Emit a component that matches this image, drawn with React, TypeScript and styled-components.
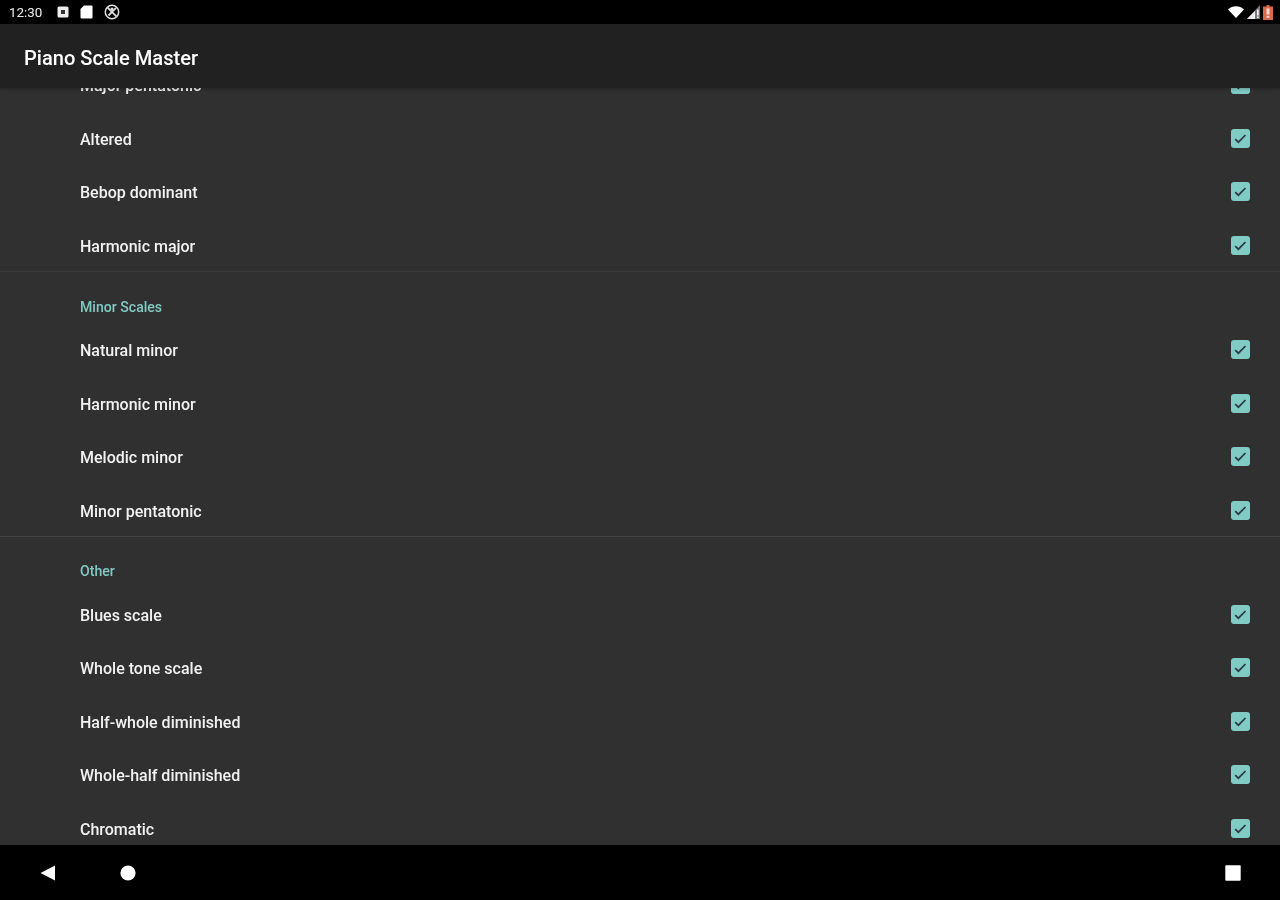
import React from 'react';
import styled, { createGlobalStyle } from 'styled-components';

const GlobalStyle = createGlobalStyle`
  html, body {
    margin: 0;
    padding: 0;
    background: #000;
  }
`;

const Screen = styled.div`
  width: 1280px;
  height: 900px;
  display: flex;
  flex-direction: column;
  overflow: hidden;
  background: #303030;
  font-family: Roboto, "Liberation Sans", sans-serif;
  filter: blur(0.6px);
`;

const StatusBar = styled.div`
  height: 24px;
  flex: none;
  background: #000;
  display: flex;
  align-items: center;
  justify-content: space-between;
  padding: 0 7px 0 9px;
  color: #fff;
`;

const StatusGroup = styled.div<{ $gap: number }>`
  display: flex;
  align-items: center;
  gap: ${({ $gap }) => $gap}px;
`;

const Clock = styled.span`
  font-size: 13.4px;
  width: 37px;
  color: #eee;
`;

const AppBar = styled.header`
  height: 64px;
  flex: none;
  background: #212121;
  display: flex;
  align-items: center;
  padding: 3px 0 0 24px;
  box-sizing: border-box;
  position: relative;
  z-index: 1;
  box-shadow: 0 1px 3px rgba(0, 0, 0, 0.25);
`;

const Title = styled.h1`
  margin: 0;
  font-size: 20.1px;
  font-weight: 500;
  color: #fff;
`;

const Viewport = styled.main`
  flex: 1;
  min-height: 0;
  overflow: hidden;
`;

const ScrollContent = styled.div`
  margin-top: -28.9px;
`;

const Row = styled.div`
  height: 53.5px;
  display: flex;
  align-items: center;
  justify-content: space-between;
  padding: 0 30px 0 80px;
`;

const RowLabel = styled.span`
  font-size: 16px;
  font-weight: 500;
  color: #f2f2f2;
`;

const CheckBox = styled.span`
  width: 19px;
  height: 19px;
  margin-bottom: 2px;
  border-radius: 3px;
  background: #80cbc4;
  display: flex;
  align-items: center;
  justify-content: center;
`;

const Divider = styled.hr<{ $bright?: boolean }>`
  margin: -1.9px 0 0;
  border: 0;
  height: 1px;
  background: ${({ $bright }) => ($bright ? '#454545' : '#3a3a3a')};
`;

const SectionHeader = styled.h2`
  margin: 0;
  height: 51.65px;
  box-sizing: border-box;
  padding: 25.4px 0 0 80px;
  font-size: 14.1px;
  line-height: 18px;
  font-weight: 500;
  color: #80cbc4;
`;

const NavBar = styled.nav`
  height: 55px;
  flex: none;
  background: #000;
  display: flex;
  align-items: center;
  padding: 0 39px 0 40px;
  position: relative;
  z-index: 1;
`;

const NavLeft = styled.div`
  display: flex;
  align-items: center;
  gap: 64px;
  flex: 1;
`;

const sections = [
  { rows: ['Major pentatonic', 'Altered', 'Bebop dominant', 'Harmonic major'] },
  { title: 'Minor Scales', rows: ['Natural minor', 'Harmonic minor', 'Melodic minor', 'Minor pentatonic'] },
  { title: 'Other', rows: ['Blues scale', 'Whole tone scale', 'Half-whole diminished', 'Whole-half diminished', 'Chromatic'] },
];

const Check = () => (
  <svg width="13" height="11" viewBox="0 0 13 11" aria-hidden="true">
    <path d="M1.2 6.2 L4.4 9.2 L11.5 2" fill="none" stroke="#2b3a44" strokeWidth="1.7" />
  </svg>
);

const NotificationIcon = () => (
  <svg width="12" height="12" viewBox="0 0 12 12" aria-hidden="true">
    <rect x="0.5" y="0.5" width="11" height="11" rx="1.5" fill="#eee" />
    <rect x="4" y="4" width="4" height="4" fill="#333" />
  </svg>
);

const SdCardIcon = () => (
  <svg width="13" height="14" viewBox="0 0 13 14" aria-hidden="true">
    <path d="M4 0.5 H11.5 A1 1 0 0 1 12.5 1.5 V12.5 A1 1 0 0 1 11.5 13.5 H1.5 A1 1 0 0 1 0.5 12.5 V4 Z" fill="#fff" />
  </svg>
);

const BlockedIcon = () => (
  <svg width="16" height="16" viewBox="0 0 16 16" aria-hidden="true">
    <circle cx="8" cy="8" r="6.7" fill="none" stroke="#ddd" strokeWidth="1.5" />
    <path d="M3.4 3.4 L12.6 12.6 M12 3.8 L4.5 11.5" stroke="#ddd" strokeWidth="1.8" />
    <circle cx="8" cy="5" r="1.6" fill="#ddd" />
  </svg>
);

const WifiIcon = () => (
  <svg width="16" height="12" viewBox="0 0 16 12" aria-hidden="true">
    <path d="M0 3.4 C4.4 -0.8 11.6 -0.8 16 3.4 L8 12 Z" fill="#fff" />
  </svg>
);

const SignalIcon = () => (
  <svg width="13" height="14" viewBox="0 0 13 14" aria-hidden="true">
    <path d="M13 0 V14 H0 Z" fill="#777" />
    <path d="M8 6 V14 H0 Z" fill="#eee" />
    <rect x="10" y="4.5" width="1.6" height="6" fill="#fff" />
    <rect x="10" y="11.5" width="1.6" height="1.6" fill="#fff" />
  </svg>
);

const BatteryIcon = () => (
  <svg width="10" height="15" viewBox="0 0 10 15" aria-hidden="true">
    <path d="M3.5 0 H6.5 V1.5 H10 V15 H0 V1.5 H3.5 Z" fill="#d9694a" />
    <rect x="3.5" y="3.5" width="3" height="6" fill="#f6d8cd" />
    <rect x="3.5" y="10.8" width="3" height="2" fill="#f6d8cd" />
  </svg>
);

const BackIcon = () => (
  <svg width="16" height="16" viewBox="0 0 16 16" aria-hidden="true">
    <path d="M15 0.5 V15.5 L0.5 8 Z" fill="#fff" />
  </svg>
);

const HomeIcon = () => (
  <svg width="16" height="16" viewBox="0 0 16 16" aria-hidden="true">
    <circle cx="8" cy="8" r="7.6" fill="#fff" />
  </svg>
);

const RecentsIcon = () => (
  <svg width="16" height="16" viewBox="0 0 16 16" aria-hidden="true">
    <rect x="0.3" y="0.3" width="15.4" height="15.4" rx="1" fill="#fff" />
  </svg>
);

export default function App() {
  return (
    <>
      <GlobalStyle />
      <Screen>
        <StatusBar>
          <StatusGroup $gap={11}>
            <Clock>12:30</Clock>
            <NotificationIcon />
            <SdCardIcon />
            <BlockedIcon />
          </StatusGroup>
          <StatusGroup $gap={3}>
            <WifiIcon />
            <SignalIcon />
            <BatteryIcon />
          </StatusGroup>
        </StatusBar>
        <AppBar>
          <Title>Piano Scale Master</Title>
        </AppBar>
        <Viewport>
          <ScrollContent>
            {sections.map((section, i) => (
              <section key={section.title ?? 'major'}>
                {i > 0 && <Divider $bright={i === 2} />}
                {section.title && <SectionHeader>{section.title}</SectionHeader>}
                {section.rows.map((row) => (
                  <Row key={row}>
                    <RowLabel>{row}</RowLabel>
                    <CheckBox>
                      <Check />
                    </CheckBox>
                  </Row>
                ))}
              </section>
            ))}
          </ScrollContent>
        </Viewport>
        <NavBar>
          <NavLeft>
            <BackIcon />
            <HomeIcon />
          </NavLeft>
          <RecentsIcon />
        </NavBar>
      </Screen>
    </>
  );
}
